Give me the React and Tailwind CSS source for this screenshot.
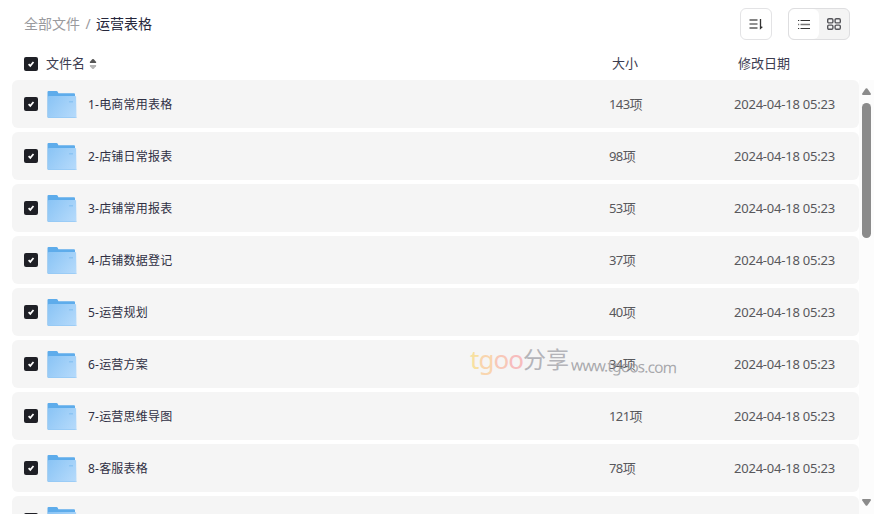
import { useState } from 'react';

const files = [
    { id: 1, name: '电商常用表格', count: 143 },
    { id: 2, name: '店铺日常报表', count: 98 },
    { id: 3, name: '店铺常用报表', count: 53 },
    { id: 4, name: '店铺数据登记', count: 37 },
    { id: 5, name: '运营规划', count: 40 },
    { id: 6, name: '运营方案', count: 34 },
    { id: 7, name: '运营思维导图', count: 121 },
    { id: 8, name: '客服表格', count: 78 },
    { id: 9, name: '', count: null }
];

const Checkbox = ({ checked, onClick }) => (
    <button
        onClick={onClick}
        className={`flex h-3.5 w-3.5 shrink-0 items-center justify-center rounded-[2px] ${
            checked ? 'bg-[#1f2026]' : 'border border-gray-300 bg-white'
        }`}
    >
        {checked && (
            <svg width="14" height="14" viewBox="0 0 14 14" fill="none">
                <path d="M4.6 7.2 6.3 8.9 9.5 5" stroke="#fff" strokeWidth="1.7" />
            </svg>
        )}
    </button>
);

const FolderIcon = () => (
    <svg width="30" height="28" viewBox="0 0 30 28" fill="none" className="shrink-0">
        <defs>
            <linearGradient id="folder" x1="2" y1="6" x2="28" y2="27" gradientUnits="userSpaceOnUse">
                <stop stopColor="#8ac4f5" />
                <stop offset="1" stopColor="#b5dafb" />
            </linearGradient>
        </defs>
        <path d="M.5 2Q.5 1 1.5 1H9.5Q10.3 1 10.7 1.8L11.4 3.3H27Q28 3.3 28 4.3V27.5H.5Z" fill="#5eaceb" />
        <path d="M1 6.8Q1 6 1.8 6H28.2Q29 6 29.1 6.8L29.5 27.8H1Z" fill="url(#folder)" />
        <path d="M1 27.5H29.5" stroke="#8ec6f5" strokeWidth=".6" />
        <path d="M22 11H26V12.5H22Z" fill="#8cc4f3" />
    </svg>
);

const Toolbar = () => (
    <div className="flex h-12 items-center justify-between pr-6 pl-6">
        <div className="flex items-center text-sm leading-5">
            <span className="text-[#9a9a9e]">全部文件</span>
            <span className="w-4 text-center text-[#9a9a9e]">/</span>
            <span className="text-[#25263b]">运营表格</span>
        </div>
        <div className="flex gap-4">
            <button className="flex h-8 w-8 items-center justify-center rounded-md border border-[#e3e3e5] bg-white">
                <svg width="14" height="12" viewBox="0 0 14 12" fill="none">
                    <path d="M.5 2H8.5" stroke="#333" strokeWidth="1.2" />
                    <path d="M.5 6H8.5" stroke="#777" strokeWidth="1.6" />
                    <path d="M.5 10H8.5" stroke="#333" strokeWidth="1.2" />
                    <path d="M11.5 1V10.3L13.3 8.8" stroke="#333" strokeWidth="1.3" />
                </svg>
            </button>
            <div className="flex h-8 w-[62px] overflow-hidden rounded-md border border-[#dedee0] bg-[#f4f4f4]">
                <button className="flex w-[30px] items-center justify-center rounded-md bg-white">
                    <svg width="12" height="10" viewBox="0 0 12 10" fill="none">
                        <path d="M0 1.5H1.2M2.5 1.5H12M0 9.5H1.2M2.5 9.5H12" stroke="#333" strokeWidth="1.1" />
                        <path d="M0 5.5H1.2M2.5 5.5H12" stroke="#777" strokeWidth="1.6" />
                    </svg>
                </button>
                <button className="flex w-[30px] items-center justify-center">
                    <svg width="14" height="12" viewBox="0 0 14 12" fill="none" stroke="#55555a" strokeWidth="1.4">
                        <rect x=".7" y=".7" width="5.2" height="4.2" rx="1.2" />
                        <rect x="8.1" y=".7" width="5.2" height="4.2" rx="1.2" />
                        <rect x=".7" y="7.1" width="5.2" height="4.2" rx="1.2" />
                        <rect x="8.1" y="7.1" width="5.2" height="4.2" rx="1.2" />
                    </svg>
                </button>
            </div>
        </div>
    </div>
);

// Translucent site mark lying over the list
const Watermark = () => (
    <div className="pointer-events-none absolute top-[341px] left-[470px] flex whitespace-nowrap">
        <span className="w-[53px] text-[26px] leading-9 tracking-[-1px]">
            <span className="text-[#f8e0a0]">t</span>
            <span className="text-[#f9d5ae]">g</span>
            <span className="text-[#f8c8b8]">o</span>
            <span className="text-[#f7bdbd]">o</span>
        </span>
        <span className="text-[23px] leading-9 text-[#b4b4b9]">分享</span>
        <span className="mt-[7px] ml-0.5 rotate-[1.5deg] text-[15.5px] leading-9 tracking-[-0.9px] text-[#8f8f94]/75">
            www.tgoos.com
        </span>
    </div>
);

const App = () => {
    const [selected, setSelected] = useState(files.map((file) => file.id));
    const allSelected = selected.length === files.length;

    const toggle = (id) => {
        setSelected(selected.includes(id) ? selected.filter((item) => item !== id) : [...selected, id]);
    };

    return (
        <div className="relative flex h-[514px] w-[874px] flex-col overflow-hidden bg-white font-['Noto_Sans','Noto_Sans_CJK_SC',sans-serif]">
            <Toolbar />

            {/* Column titles */}
            <div className="flex h-8 shrink-0 items-center pl-6 text-[13px] text-[#3c3c50]">
                <Checkbox checked={allSelected} onClick={() => setSelected(allSelected ? [] : files.map((file) => file.id))} />
                <div className="flex w-[574px] items-center gap-1 pl-2">
                    <span>文件名</span>
                    <svg width="8" height="12" viewBox="0 0 8 12">
                        <path d="M.8 5 1 3.8 3.2 1.3Q4 .5 4.8 1.3L7 3.8 7.2 5Z" fill="#555" />
                        <path d="M.8 7 1 8.2 3.2 10.7Q4 11.5 4.8 10.7L7 8.2 7.2 7Z" fill="#b5b5b5" />
                    </svg>
                </div>
                <span className="w-[126px]">大小</span>
                <span>修改日期</span>
            </div>

            <div className="flex min-h-0 flex-1">
                <div className="flex w-[859px] flex-col gap-1 overflow-hidden pl-3">
                    {files.map((file) => (
                        <div key={file.id} className="flex h-12 shrink-0 items-center rounded-md bg-[#f5f5f5] pl-3 text-[13px] text-[#58585c]">
                            <Checkbox checked={selected.includes(file.id)} onClick={() => toggle(file.id)} />
                            <div className="flex w-[571px] items-center gap-[11px] pl-[9px]">
                                <FolderIcon />
                                {file.name && (
                                    <span className="pt-0.5 text-xs tracking-[0.2px] text-[#303044]">
                                        {file.id}-{file.name}
                                    </span>
                                )}
                            </div>
                            {file.count && (
                                <>
                                    <span className="w-[125px] pt-0.5 tracking-[-0.6px]">{file.count}项</span>
                                    <span className="pt-0.5 tracking-[-0.22px]">2024-04-18 05:23</span>
                                </>
                            )}
                        </div>
                    ))}
                </div>

                {/* Scrollbar */}
                <div className="flex w-[15px] flex-col items-center bg-[#fcfcfc] pt-2 pb-2">
                    <svg width="9" height="7" viewBox="0 0 9 7">
                        <path d="M3.7.6Q4.5-.3 5.3.6L8.8 5.5Q9.3 7 8 7H1Q-.3 7 .2 5.5Z" fill="#8b8b8b" />
                    </svg>
                    <div className="mt-2 h-[135px] w-[9px] rounded-full bg-[#8b8b8b]"></div>
                    <svg width="9" height="7" viewBox="0 0 9 7" className="mt-auto">
                        <path d="M3.7 6.4Q4.5 7.3 5.3 6.4L8.8 1.5Q9.3 0 8 0H1Q-.3 0 .2 1.5Z" fill="#8b8b8b" />
                    </svg>
                </div>
            </div>

            <Watermark />
        </div>
    );
};

export default App;
